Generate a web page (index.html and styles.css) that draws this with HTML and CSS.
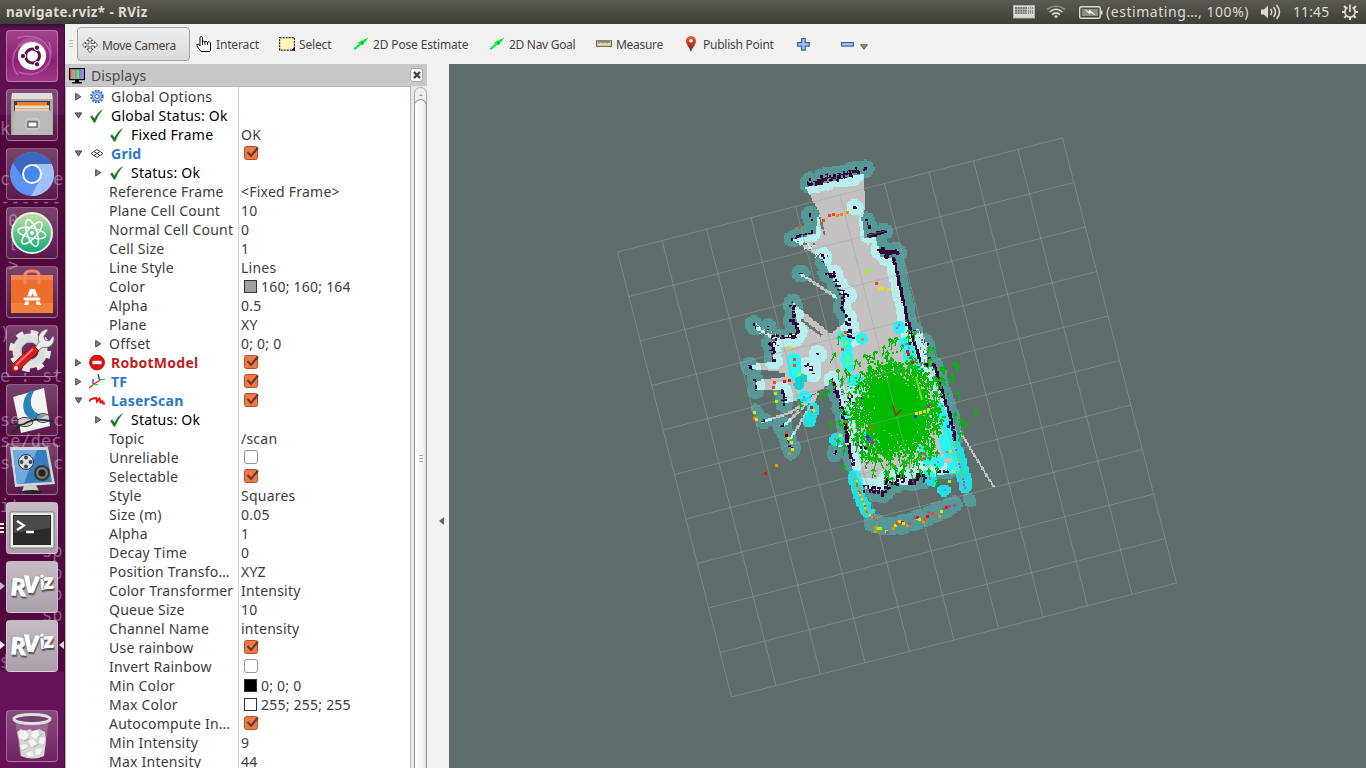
FILE: index.html
```html
<!DOCTYPE html>
<html lang="en">
<head>
<meta charset="utf-8">
<title>navigate.rviz* - RViz</title>
<link rel="stylesheet" href="styles.css">
</head>
<body>
<header class="topbar">
  <div class="title">navigate.rviz* - RViz</div>
  <div class="tray">
    <svg class="t-kbd" width="22" height="14" viewBox="0 0 22 14"><rect x=".5" y=".5" width="21" height="12.500" fill="#dfdbd2" stroke="#b5b2ab"/><rect x="2" y="2" width="12" height="7" fill="#777"/><path d="M2 4.500h12M2 7h12M4.500 2v7M7 2v7M9.500 2v7M12 2v7" stroke="#bbb" stroke-width=".7"/><path d="M15 2h5v7h-5z" fill="#888"/><path d="M15 4.500h5M16.500 2v7M18.500 2v7" stroke="#ccc"/></svg>
    <svg class="t-wifi" width="20" height="14" viewBox="0 0 20 14" fill="none" stroke="#dfdbd2" stroke-width="1.600"><path d="M1 4.500Q10-2.500 19 4.500" stroke="#8f8c85"/><path d="M3.500 7Q10 1.500 16.500 7"/><path d="M6 9.700Q10 6 14 9.700"/><path d="M8 11l2 2.500 2-2.500q-2-1.500-4 0z" fill="#dfdbd2" stroke="none"/></svg>
    <svg class="t-bat" width="24" height="13" viewBox="0 0 24 13"><rect x=".7" y=".7" width="20.500" height="11.500" rx="1.500" fill="none" stroke="#dfdbd2" stroke-width="1.400"/><rect x="3" y="3" width="16" height="7" fill="#8b8983"/><path d="M22 4.500h1.500v4H22z" fill="#dfdbd2"/><path d="M5 3l5 2.500.5-2L17 9.500l-5.500-2.500-.7 1.500z" fill="#eee"/></svg>
    <span class="t-est">(estimating…, 100%)</span>
    <svg class="t-vol" width="20" height="16" viewBox="0 0 20 16" fill="none" stroke="#dfdbd2" stroke-width="1.500"><path d="M0 5.500h3l4-4v13l-4-4H0z" fill="#dfdbd2" stroke="none"/><path d="M9.500 5q2.500 3 0 6M12.500 3q4 5 0 10M15.500 1q6 7 0 14"/></svg>
    <span class="t-time">11:45</span>
    <svg class="t-gear" width="16" height="16" viewBox="0 0 16 16" fill="none" stroke="#dfdbd2"><path d="M5.500 3.400a5.200 5.200 0 1 0 5 0" stroke-width="1.700"/><path d="M8 .5V8" stroke-width="1.700"/><path d="M0 8h3M13 8h3M2 2l2.300 2.300M14 2l-2.300 2.300M2.300 13.700l2-2M13.700 13.700l-2-2M8 13v3" stroke-width="2.200"/></svg>
  </div>
</header>
<div class="body">
  <nav class="launcher">
    <div class="ghost" aria-hidden="true" id="ghost"></div>
    <div class="tile dash"><svg viewBox="0 0 52 52"><g fill="none" stroke="#d487bf" opacity=".55" stroke-width="1.500"><path d="M11 8C35 0 50 20 42 35M43 12c8 24-12 38-30 30M12 45C1 32 8 12 26 12"/></g><path d="M12 15C22 0 42 10 41 27L26 26z" fill="#c673ac" opacity=".4"/><circle cx="26" cy="26" r="14" fill="#fff"/><circle cx="26.500" cy="26" r="7" fill="none" stroke="#5a1646" stroke-width="3"/><g fill="#5a1646" stroke="#fff"><circle cx="17" cy="26" r="2.700"/><circle cx="31" cy="17.700" r="2.700"/><circle cx="31" cy="34.300" r="2.700"/></g></svg></div>
    <div class="tile"><svg viewBox="0 0 52 52"><path d="M6 4h40l1 8H5z" fill="#ddd"/><path d="M5 10h42v36H5z" fill="#a9a9a8"/><path d="M8 12h36v14H8z" fill="#45413d"/><path d="M11 13h30v9H11z" fill="#e18138"/><path d="M9 16h34v8H9z" fill="#f2ac6a"/><path d="M9 18h34" stroke="#fff"/><path d="M7 24l3-4h32l4 4v22H7z" fill="#b9b9b8"/><path d="M9 21h34" stroke="#e7e7e7"/><rect x="20" y="30" width="13" height="10" rx="2" fill="#aaa" stroke="#ddd"/><rect x="22" y="33" width="9" height="5" fill="#fff" stroke="#444"/></svg></div>
    <div class="tile"><svg viewBox="0 0 52 52"><circle cx="26" cy="26" r="22" fill="#5b93f3"/><path d="M7 15A22 22 0 0 1 45 15l1 1H26l-9 14z" fill="#3b68bd"/><path d="M45.600 16H28l8 12-11 20A22 22 0 0 0 45.600 16z" fill="#a0c1fa"/><circle cx="26" cy="26" r="10" fill="#fff"/><circle cx="26" cy="26" r="8" fill="#4688f4"/></svg></div>
    <div class="tile"><svg viewBox="0 0 52 52"><defs><linearGradient id="atom" x2="0" y2="1"><stop stop-color="#c5e4a5"/><stop offset="1" stop-color="#0aa875"/></linearGradient></defs><circle cx="26" cy="26" r="20" fill="url(#atom)" stroke="#eee" stroke-width="2"/><g fill="none" stroke="#fff" stroke-width="1.500"><ellipse cx="26" cy="26" rx="14" ry="5" transform="rotate(12 26 26)"/><ellipse cx="26" cy="26" rx="14" ry="5" transform="rotate(72 26 26)"/><ellipse cx="26" cy="26" rx="14" ry="5" transform="rotate(132 26 26)"/></g><circle cx="26" cy="26" r="2" fill="#fff"/></svg></div>
    <div class="tile"><svg viewBox="0 0 52 52"><path d="M5 9h42v38H5z" fill="#ef6d2c"/><path d="M5 9h42v5H5z" fill="#f3824b"/><path d="M5 37h42v10H5z" fill="#f3813e"/><path d="M19 18V9q0-4 7-4t7 4v9" fill="none" stroke="#ee8a61" stroke-width="3"/><path d="M18 39l6-16h5l6 16h-4l-4.500-12L22 39z" fill="#fff"/><rect x="17" y="31" width="18" height="4" rx="2" fill="#fff" stroke="#ef6d2c"/></svg></div>
    <div class="tile"><svg viewBox="0 0 52 52"><circle cx="24" cy="26" r="13" fill="none" stroke="#dedede" stroke-width="9"/><circle cx="24" cy="26" r="18" fill="none" stroke="#e7e7e7" stroke-width="6" stroke-dasharray="7.100 7.050"/><circle cx="24" cy="26" r="9" fill="none" stroke="#b7b7b7"/><path d="M29 23l4-6c-2-6 1-11 8-13l1 1-4 6 1 4 4 1 4-5 1 1c1 7-5 12-11 10l-5 4z" fill="#eee" stroke="#777"/><path d="M27 20l6 6L13 45q-4 4-7 1-2-4 1-7z" fill="#d91d1a" stroke="#8a1010"/><path d="M10 40l17-16" stroke="#f77" stroke-width="2"/><circle cx="10" cy="43" r="2" fill="#fff"/></svg></div>
    <div class="tile"><svg viewBox="0 0 52 52"><path d="M7 13l31-9 6 38-29 7z" fill="#f3f3f2"/><path d="M29 6l-6 2C14 17 16 32 26 35q8 1 16-5-8 2-13-2C23 22 24 12 29 6z" fill="#2b83bb"/><g fill="#aaa8" stroke="#444"><ellipse cx="19" cy="38" rx="8" ry="4.500"/><ellipse cx="37" cy="34" rx="7" ry="4.500"/></g><path d="M4 40q8 2 14 0c10-6 18-5 30-2M6 49l8-7" fill="none" stroke="#292929" stroke-width="1.700"/></svg></div>
    <div class="tile"><svg viewBox="0 0 52 52"><path d="M4 4h38l7 37-40 3z" fill="#d4d6d9"/><path d="M7 7h33l6 32-35 2z" fill="#367dbd"/><path d="M7 7h24L18 40l-7 1z" fill="#6eaae0"/><path d="M18 43l12-1 3 6H16z" fill="#ccc"/><ellipse cx="26" cy="49" rx="10" ry="2" fill="#252525"/><circle cx="20" cy="19" r="7.500" fill="#ddd" stroke="#333"/><g fill="#354a5d"><circle cx="20" cy="14.500" r="2"/><circle cx="15.500" cy="19" r="2"/><circle cx="24.500" cy="19" r="2"/><circle cx="20" cy="23.500" r="2"/></g><circle cx="36" cy="30" r="7" fill="#777" stroke="#333" stroke-width="2"/><circle cx="36" cy="30" r="3.500" fill="#222"/></svg></div>
    <div class="tile lit"><svg viewBox="0 0 52 52"><rect x="4" y="10" width="44" height="36" rx="1" fill="#eee" stroke="#777"/><rect x="7" y="13" width="38" height="30" fill="#292b2a"/><path d="M8 14h36v12L8 31z" fill="#484b48"/><path d="M11 19l7 4.500-7 4.500M20 30h8" fill="none" stroke="#fff" stroke-width="2.300"/></svg></div>
    <div class="tile lit rv"><span class="rz r1">R</span><span class="rz r2">V</span><span class="rz r3">i</span><span class="rz r4">z</span></div>
    <div class="tile lit rv"><span class="rz r1">R</span><span class="rz r2">V</span><span class="rz r3">i</span><span class="rz r4">z</span></div>
    <div class="tile bin"><svg viewBox="0 0 52 52"><path d="M9 9l5 37q12 5 24 0l5-37z" fill="#c6b0c2" opacity=".35"/><path d="M11 22l4-3 4 2 5-2 3 3 6-3 6 3 1 8-2 16q-11 5-23 0l-2-16z" fill="#d4d6d2"/><g fill="#f4f5f2"><path d="M13 22l6-2 4 5-4 5-6-2zM26 21l5-1 3 5-5 4-4-3zM34 28l5-1-1 7-5-1zM22 31l5-2 4 5-5 3zM14 35l6-1 2 5-5 3zM30 39l6-1-1 6-6 1zM20 43l6-2 2 5-6 1z"/></g><path d="M18 31l5-2M27 37l6-3M16 41l6-3M32 27l4-3" stroke="#a8aaa6"/><ellipse cx="26" cy="9" rx="18" ry="4.500" fill="#74416b" stroke="#e0e0df" stroke-width="3"/></svg></div>
    <i class="mark m1"></i><i class="mark m2"></i><i class="mark m3"></i><i class="mark m4"></i>
  </nav>
  <main class="window">
    <div class="toolbar">
      <i class="grip"></i>
      <div class="tool active"><svg width="16" height="16" viewBox="0 0 16 16" fill="#fff" stroke="#333"><path d="M8 .5l3 3H9v3h3.500v-2L15.500 8l-3 3V9H9v3h2l-3 3.500L5 12h2V9H3.500v2l-3-3 3-3v2H7V3.500H5z" stroke-width=".8"/></svg><span>Move Camera</span></div>
      <div class="tool w-int"><svg width="17" height="17" viewBox="0 0 17 17"><path d="M5 15.500L1.500 11 .8 8.500l1.700-.5L4 10V2q0-1.500 1.200-1.500T6.500 2v4l1-1 1.500 1 1-1 1.500 1.500 1.500-1 1.500 1.500v7.500l-1 1z" fill="#fff" stroke="#111"/><path d="M6.500 6v3M9 6v3M11.500 6v3" stroke="#111"/></svg><span>Interact</span></div>
      <div class="tool w-sel"><svg width="16" height="14" viewBox="0 0 16 14"><rect x=".6" y=".6" width="14.800" height="12.500" fill="#fcf5b5" stroke="#222" stroke-width="1.200" stroke-dasharray="2 1"/><path d="M12 13.500h4V9.500z" fill="#111"/></svg><span>Select</span></div>
      <div class="tool w-pose"><svg width="16" height="14" viewBox="0 0 16 14"><path d="M.5 11.500L6 7 5 5.500 15.500.5 10 8 8.500 7.500 2 13z" fill="#00f52c"/><path d="M8 5l2 1-1 1.500" fill="none" stroke="#075"/></svg><span>2D Pose Estimate</span></div>
      <div class="tool w-nav"><svg width="16" height="14" viewBox="0 0 16 14"><path d="M.5 11.500L6 7 5 5.500 15.500.5 10 8 8.500 7.500 2 13z" fill="#00f52c"/><path d="M8 5l2 1-1 1.500" fill="none" stroke="#075"/></svg><span>2D Nav Goal</span></div>
      <div class="tool w-mea"><svg width="16" height="8" viewBox="0 0 16 8"><rect x=".5" y=".8" width="15" height="5.500" fill="#e7dda9" stroke="#555"/><path d="M3 1v2.500M5 1v2M7 1v2.500M9 1v2M11 1v2.500M13 1v2" stroke="#555"/></svg><span>Measure</span></div>
      <div class="tool w-pub"><svg width="12" height="16" viewBox="0 0 12 16"><defs><linearGradient id="pin" x2="0" y2="1"><stop stop-color="#f2593a"/><stop offset=".5" stop-color="#c23a22"/><stop offset="1" stop-color="#4b210f"/></linearGradient></defs><path d="M6 15.800C5 12 1 9 1 5a5 5 0 0 1 10 0c0 4-4 7-5 10.800z" fill="url(#pin)"/><circle cx="6" cy="4.700" r="1.800" fill="#fff"/></svg><span>Publish Point</span></div>
      <svg class="plus" width="13" height="13" viewBox="0 0 13 13"><path d="M4.700.7h3.500v4h4v3.500h-4v4H4.700v-4h-4V4.700h4z" fill="#a9c8ee" stroke="#3465a4" stroke-width="1.300"/></svg>
      <svg class="minus" width="13" height="5" viewBox="0 0 13 5"><rect x=".6" y=".6" width="11.800" height="3.500" fill="#a9c8ee" stroke="#3465a4" stroke-width="1.200"/></svg>
      <svg class="drop" width="8" height="6" viewBox="0 0 8 6"><path d="M.5.7h7L4 5.300z" fill="#888" stroke="#666"/></svg>
    </div>
    <div class="content">
      <section class="dock">
        <div class="dockhead"><svg width="16" height="16" viewBox="0 0 16 16"><defs><linearGradient id="mon"><stop stop-color="#c77"/><stop offset=".33" stop-color="#c99"/><stop offset=".34" stop-color="#5a6"/><stop offset=".66" stop-color="#8d8"/><stop offset=".67" stop-color="#77c"/><stop offset="1" stop-color="#aaf"/></linearGradient></defs><rect x=".6" y=".6" width="14.800" height="11" fill="url(#mon)" stroke="#000" stroke-width="1.200"/><path d="M6 12h4v2h3v1.500H3V14h3z" fill="#000"/></svg><span>Displays</span><div class="close"><svg width="8" height="8" viewBox="0 0 8 8"><path d="M1 1l6 6M7 1L1 7" stroke="#444" stroke-width="2.400"/></svg></div></div>
        <div class="treewrap"><div class="tree" id="tree"></div><div class="scroll"><div class="up"></div><div class="thumb"><i></i></div></div></div>
      </section>
      <div class="splitter"><i></i></div>
      <section class="view"><canvas class="map" id="map" width="204" height="300"></canvas><svg class="over" id="over" viewBox="449 64 917 704" width="917" height="704"></svg></section>
    </div>
  </main>
</div>
<script src="app.js"></script>
</body>
</html>
```
FILE: styles.css
```css
* { box-sizing: border-box; }
body { margin: 0; width: 1366px; height: 768px; overflow: hidden; display: flex; flex-direction: column; font-family: "Noto Sans", "Open Sans", sans-serif; background: #f2f1f0; color: #3c3c3c; }
svg { display: block; flex: none; }
.topbar { height: 24px; flex: none; display: flex; justify-content: space-between; align-items: center; background: linear-gradient(#5c5a50, #3e3d38); color: #dfdbd2; font-size: 14px; line-height: 24px; }
.title { padding-left: 6px; font-weight: 700; font-size: 13.4px; letter-spacing: .4px; }
.tray { display: flex; align-items: center; width: 353px; white-space: nowrap; }
.t-wifi { margin-left: 11px; }
.t-bat { margin-left: 13px; }
.t-est { margin-left: 3px; width: 144px; font-size: 14px; letter-spacing: .55px; }
.t-vol { margin-left: 11px; }
.t-time { margin-left: 12px; width: 37px; font-size: 13.8px; letter-spacing: .2px; }
.t-gear { margin-left: 12px; }
.body { flex: 1; display: flex; min-height: 0; }
.launcher { position: relative; width: 65px; flex: none; padding: 6px 0 0 6px; display: flex; flex-direction: column; gap: 7px; background: linear-gradient(#360a30 0, #5c1150 5px, #5c1150 90px, #50083f 91px, #50083f 647px, #661258 648px); border-right: 1px solid #430a39; overflow: hidden; }
.tile { position: relative; flex: none; width: 52px; height: 52px; border-radius: 4px; border: 1px solid rgba(255,255,255,.3); background: linear-gradient(rgba(255,255,255,.24), rgba(255,255,255,.07)); }
.tile svg { width: 52px; height: 52px; margin: -1px; }
.dash { background: linear-gradient(#a14489, #8f1f78 60%, #9b3b84); }
.lit { background: linear-gradient(#c6bac4, #aba0aa); }
.bin { margin-top: 31px; }
.rz { position: absolute; font-family: "Open Sans", sans-serif; font-weight: 800; color: #fff; text-shadow: 1px 2px 1px #555, -1px 0 1px #999; line-height: 1; }
.r1 { font-size: 25px; left: 3px; top: 12px; transform: rotate(5deg); }
.r2 { font-size: 24px; left: 16px; top: 10px; transform: rotate(5deg); }
.r3 { font-size: 20px; left: 32px; top: 11px; transform: scaleX(.8) rotate(-5deg); }
.r4 { font-size: 21px; left: 36px; top: 9px; transform: rotate(-3deg); }
.ghost { position: absolute; left: 0; top: 0; }
.ghost span { position: absolute; font: 17px/20px "DejaVu Sans Mono", monospace; color: rgba(222,175,215,.5); white-space: pre; }
.mark { position: absolute; width: 0; height: 0; border: 4px solid transparent; border-left: 5px solid #eee; left: 0; }
.m1 { top: 499px; height: 12px; border: 0; width: 4px; background: repeating-linear-gradient(#eee 0 2px, transparent 2px 4px); }
.m2 { top: 558px; border-left-color: #c9b4c5; }
.m3 { top: 617px; }
.m4 { top: 617px; left: auto; right: 0; border-left: 0; border-right: 5px solid #ddd; }
.window { flex: 1; min-width: 0; display: flex; flex-direction: column; }
.toolbar { height: 40px; flex: none; display: flex; align-items: center; padding-left: 4px; font-size: 12px; letter-spacing: -.15px; color: #444; white-space: nowrap; }
.grip { width: 4px; height: 8px; margin-right: 4px; background: repeating-linear-gradient(#bbb 0 1px, transparent 1px 3px); }
.tool { display: flex; align-items: center; }
.tool span { margin-left: 4px; }
.active { width: 113px; height: 34px; padding: 2px 0 0 4px; border: 1px solid #a5a29d; border-radius: 4px; background: linear-gradient(#efeeed, #dcdad8); letter-spacing: -.35px; }
.w-int { margin-left: 6px; width: 83px; }
.w-int span { margin-left: 3px; }
.w-sel { width: 74px; }
.w-pose { width: 136px; }
.w-nav { width: 107px; letter-spacing: -.3px; }
.w-mea { width: 89px; letter-spacing: -.3px; }
.w-pub { width: 112px; letter-spacing: -.25px; }
.w-pub span { margin-left: 6px; }
.minus { margin-left: 31px; }
.drop { margin: 5px 0 0 6px; }
.content { flex: 1; display: flex; min-height: 0; }
.dock { width: 362px; flex: none; display: flex; flex-direction: column; }
.dockhead { height: 22px; flex: none; display: flex; align-items: center; background: #c8c8c8; padding: 1px 4px 0; font-size: 14px; letter-spacing: .1px; }
.dockhead span { flex: 1; margin-left: 6px; color: #4a4a4a; }
.close { width: 13px; height: 14px; border-radius: 3px; background: #f5f5f5; border: 1px solid #aaa; display: grid; place-items: center; margin-top: -2px; }
.treewrap { flex: 1; display: flex; min-height: 0; }
.tree { width: 346px; flex: none; overflow: hidden; background: linear-gradient(#d5d5d5, #d5d5d5) 172px 0 / 1px 100% no-repeat #fff; border: 1px solid #bab6b2; border-bottom: 0; }
.row { height: 19px; display: flex; line-height: 19px; font-size: 14px; white-space: nowrap; letter-spacing: .23px; }
.name { width: 173px; flex: none; display: flex; align-items: center; }
.name b { font-weight: 700; letter-spacing: .25px; }
.lv0 { padding-left: 8px; }
.lv1 { padding-left: 28px; }
.arrow { width: 15px; flex: none; }
.row .ic { width: 22px; flex: none; }
.black { color: #000; }
.blue { color: #2a78c8; }
.red { color: #c01f1f; }
.val { display: flex; align-items: center; padding-left: 2px; }
.chip { width: 13px; height: 13px; margin: 0 4px 0 3px; border: 1px solid #333; }
.box { width: 14px; height: 14px; margin: 0 0 1px 3px; border: 1px solid #99958f; border-radius: 3px; background: #fff; }
.val svg { margin: 0 0 1px 2px; }
.scroll { width: 16px; padding: 1px 0 0 3px; background: #e8e7e5; display: flex; flex-direction: column; }
.up { width: 13px; height: 20px; flex: none; border: 1px solid #aaa7a3; border-radius: 7px 7px 0 0; background: #f0efee; position: relative; }
.up::after { content: ""; position: absolute; left: 4px; top: 6px; border: 2px solid transparent; border-top: 0; border-bottom-color: #999; }
.thumb { margin-top: -8px; width: 13px; flex: 1; border: 1px solid #96928e; border-bottom: 0; border-radius: 7px 7px 0 0; background: linear-gradient(90deg, #fff, #f4f4f3 70%, #dedcda); display: grid; place-items: center; position: relative; }
.thumb i { width: 4px; height: 8px; margin-top: 50px; background: repeating-linear-gradient(#aaa 0 1px, transparent 1px 3px); }
.splitter { width: 22px; flex: none; padding: 453px 0 0 12px; }
.splitter i { display: block; width: 0; height: 0; border: 4px solid transparent; border-left: 0; border-right: 5px solid #666; }
.view { flex: 1; position: relative; background: #5f6e6c; overflow: hidden; }
.map { position: absolute; left: 287px; top: 86px; width: 272px; height: 400px; image-rendering: pixelated; }
.over { position: absolute; left: 0; top: 0; }
```
FILE: app.js
```javascript
// ---- property tree ----
const icons = {
  gear: '<circle cx="8" cy="7.500" r="5.800" fill="none" stroke="#4478b8" stroke-width="2" stroke-dasharray="2 1.036"/><circle cx="8" cy="7.500" r="4.500" fill="#a5c5ea" stroke="#4478b8"/><circle cx="8" cy="7.500" r="2" fill="#dce9f7" stroke="#4478b8"/>',
  ok: '<path d="M1.500 9L3 7.500l2.500 3.300Q9 4 13.500 1.500 9 7 6 14.500H5z" fill="#1e7420" stroke="#1e7420" stroke-width=".4"/>',
  grid: '<path d="M8 3.500L14 7.500 8 11.500 2 7.500zM5 5.500l6 4M11 5.500l-6 4" fill="none" stroke="#444"/>',
  stop: '<circle cx="8" cy="7.500" r="7.500" fill="#d11" stroke="#a00" stroke-width=".8"/><rect x="3.500" y="5.800" width="9" height="3.400" fill="#fff"/>',
  tf: '<g fill="none" stroke-width="1.200"><path d="M0 14l5-4 6-4" stroke="#e11"/><path d="M4 5v5M9 0l1.500 6" stroke="#22d"/><path d="M4 10.500h5M10.500 5.500H16" stroke="#1d1"/></g>',
  laser: '<path d="M0 8.500l1.500-2 3-1 3-.5.5 3.500 2.500-3 1 4 2-1.500.5 2.500H16" fill="none" stroke="#f00" stroke-width="1.800"/>'
};
const check = '<svg width="17" height="16" viewBox="0 0 17 16"><rect x="1.500" y="1.500" width="13" height="13" rx="2" fill="#f0784a" stroke="#b94c27"/><path d="M4.500 7l3.500 4L15 2.500" fill="none" stroke="#613a28" stroke-width="2"/></svg>';
// level, arrow, icon, label, class, value, swatch
const rows = [
  [0, 'r', 'gear', 'Global Options', '', ''], [0, 'd', 'ok', 'Global Status: Ok', 'black', ''], [1, '', 'ok', 'Fixed Frame', 'black', 'OK'],
  [0, 'd', 'grid', '<b>Grid</b>', 'blue', true], [1, 'r', 'ok', 'Status: Ok', 'black', ''],
  [1, '', '', 'Reference Frame', '', '&lt;Fixed Frame&gt;'], [1, '', '', 'Plane Cell Count', '', '10'], [1, '', '', 'Normal Cell Count', '', '0'],
  [1, '', '', 'Cell Size', '', '1'], [1, '', '', 'Line Style', '', 'Lines'], [1, '', '', 'Color', '', '160; 160; 164', '#a0a0a4'],
  [1, '', '', 'Alpha', '', '0.5'], [1, '', '', 'Plane', '', 'XY'], [1, 'r', '', 'Offset', '', '0; 0; 0'],
  [0, 'r', 'stop', '<b>RobotModel</b>', 'red', true], [0, 'r', 'tf', '<b>TF</b>', 'blue', true], [0, 'd', 'laser', '<b>LaserScan</b>', 'blue', true],
  [1, 'r', 'ok', 'Status: Ok', 'black', ''], [1, '', '', 'Topic', '', '/scan'], [1, '', '', 'Unreliable', '', false], [1, '', '', 'Selectable', '', true],
  [1, '', '', 'Style', '', 'Squares'], [1, '', '', 'Size (m)', '', '0.05'], [1, '', '', 'Alpha', '', '1'], [1, '', '', 'Decay Time', '', '0'],
  [1, '', '', 'Position Transfo…', '', 'XYZ'], [1, '', '', 'Color Transformer', '', 'Intensity'], [1, '', '', 'Queue Size', '', '10'],
  [1, '', '', 'Channel Name', '', 'intensity'], [1, '', '', 'Use rainbow', '', true], [1, '', '', 'Invert Rainbow', '', false],
  [1, '', '', 'Min Color', '', '0; 0; 0', '#000'], [1, '', '', 'Max Color', '', '255; 255; 255', '#fff'], [1, '', '', 'Autocompute In…', '', true],
  [1, '', '', 'Min Intensity', '', '9'], [1, '', '', 'Max Intensity', '', '44']
];
document.getElementById('tree').innerHTML = rows.map(([lv, arr, ic, label, cls, val, chip]) => {
  const a = arr === 'r' ? '<path d="M1.500 1.500L7 5 1.500 8.500z" fill="#888" stroke="#444"/>' : arr === 'd' ? '<path d="M1 2h7L4.500 7.500z" fill="#777" stroke="#444"/>' : '';
  const v = val === true ? check : val === false ? '<i class="box"></i>' : (chip ? `<i class="chip" style="background:${chip}"></i>` : '') + val;
  return `<div class="row"><div class="name lv${lv} ${cls}"><span class="arrow"><svg width="9" height="9" viewBox="0 0 9 9.500">${a}</svg></span>` +
    (ic ? `<span class="ic"><svg width="16" height="16" viewBox="0 0 16 16">${icons[ic]}</svg></span>` : '') +
    `${label}</div><div class="val">${v}</div></div>`;
}).join('');

// ---- terminal text showing through the launcher ----
document.getElementById('ghost').innerHTML = [
  [0, 95, 'ki'], [0, 145, 'c'], [53, 145, 'e'], [0, 167, '------'], [8, 187, '0'], [8, 208, '['], [8, 231, '>'], [0, 300, ')'], [0, 342, 'e'], [20, 342, ':'], [42, 342, 'st'],
  [0, 386, 'se'], [53, 386, 'c'], [0, 407, 'se/dec'], [0, 429, 'se'], [53, 429, 'c'], [0, 472, 'it'], [42, 517, 'sp'], [42, 539, 'sp'], [42, 560, 'sp'], [42, 581, 'sp'], [0, 628, '$']
].map(([x, y, t]) => `<span style="left:${x}px;top:${y}px">${t}</span>`).join('');

// ---- occupancy map, one cell is 4/3 px ----
let seed = 71;
const rnd = () => (seed = (seed * 16807) % 2147483647) / 2147483647;
const gauss = () => rnd() + rnd() + rnd() + rnd() - 2;
const W = 204, H = 300, X0 = 736, Y0 = 150, C = 4 / 3;
const ctx = document.getElementById('map').getContext('2d');
const free = new Uint8Array(W * H), halo = new Uint8Array(W * H), wall = new Uint8Array(W * H), color = new Array(W * H);
function inside(x, y, p) {
  let r = false;
  for (let i = 0, j = p.length - 1; i < p.length; j = i++)
    if ((p[i][1] > y) !== (p[j][1] > y) && x < (p[j][0] - p[i][0]) * (y - p[i][1]) / (p[j][1] - p[i][1]) + p[i][0]) r = !r;
  return r;
}
function fillPoly(p) {
  for (let j = 0; j < H; j++) for (let i = 0; i < W; i++)
    if (inside(X0 + i * C, Y0 + j * C, p)) free[j * W + i] = 1;
}
function disc(x, y, r, f) {
  const ci = (x - X0) / C, cj = (y - Y0) / C, rr = r / C;
  for (let j = Math.floor(cj - rr); j <= cj + rr; j++) for (let i = Math.floor(ci - rr); i <= ci + rr; i++)
    if (i >= 0 && j >= 0 && i < W && j < H && Math.hypot(i - ci, j - cj) <= rr) f(j * W + i);
}
function along(pts, step, f) {
  for (let k = 1; k < pts.length; k++) {
    const [a, b] = pts[k - 1], [c, d] = pts[k], n = Math.max(1, Math.round(Math.hypot(c - a, d - b) / step));
    for (let s = 0; s <= n; s++) f(a + (c - a) * s / n, b + (d - b) * s / n);
  }
}
fillPoly([[805,187],[863,173],[865,207],[861,217],[864,238],[875,236],[880,256],[893,257],[907,315],[920,363],[935,368],[948,417],[960,470],[944,474],[930,476],[917,474],[906,484],[887,482],[882,491],[863,487],[852,468],[843,420],[834,380],[822,388],[808,396],[785,403],[781,390],[755,389],[755,380],[785,376],[784,372],[750,368],[751,364],[773,361],[772,338],[795,333],[797,323],[793,303],[803,311],[830,333],[845,321],[842,295],[830,274],[823,260],[797,243],[792,239],[815,233],[818,211]]);
fillPoly([[914,335],[919,330],[927,345],[922,366],[916,352]]);
const strokeFree = (pts, w) => along(pts, 1, (x, y) => disc(x, y, w, k => { free[k] = 1; }));
[[[801,274],[836,297]], [[755,327],[778,339]], [[817,393],[790,412],[762,421]], [[815,395],[782,426]], [[815,397],[790,438]], [[838,446],[852,443]]].forEach(l => strokeFree(l, 1.3));
function walls(pts, density, spread, thick, reach = 7.5) {
  along(pts, 1.4, (x, y) => {
    if (rnd() > density) return;
    const px = x + gauss() * spread, py = y + gauss() * spread;
    disc(px, py, thick || 1.2, k => { wall[k] = 1; });
    disc(px, py, reach + rnd() * 1.6, k => { halo[k] = 1; });
  });
}
walls([[806,184],[836,176],[863,169]], .95, 3, 1.5); walls([[808,183],[835,178],[848,174]], .5, 4, 1.2);
walls([[810,211],[811,220]], .4, 2); walls([[812,231],[799,235],[791,239]], .8, 1);
walls([[867,218],[870,229]], .6, 1.5); walls([[868,235],[884,231]], 1, .8, 1.8);
walls([[881,249],[884,254],[897,251]], 1, 2.5, 2.2, 8); walls([[893,257],[900,288],[907,320],[920,362]], 1, .5, 1.5, 8);
walls([[907,325],[914,340]], .9, 3.5); walls([[920,330],[923,336]], .4, 2); walls([[934,364],[941,390],[950,417],[955,440]], 1, .8, 1.5);
walls([[925,340],[929,356]], .3, 2); walls([[922,363],[932,367]], .5, 2); walls([[822,255],[822,265]], .25, 2);
walls([[829,271],[836,284],[845,295],[842,302],[844,312],[848,324],[850,338]], .9, 3.2, 1.5);
walls([[801,273],[799,273]], 1, 1); walls([[853,206],[854,208]], .5, 1);
walls([[793,303],[792,320],[797,331],[793,337],[774,336],[772,345],[773,362]], .8, 2.2, 1.4);
walls([[754,325],[758,329]], .6, 1); walls([[766,323],[768,328]], .3, 1); walls([[750,365],[751,370]], .8, 1); walls([[755,379],[756,390]], .6, 1);
walls([[782,388],[784,404]], .9, 1, 1.4); walls([[762,420],[764,421]], 1, 1); walls([[780,426],[783,424]], 1, 1); walls([[785,433],[790,447],[791,452]], .4, 1);
walls([[832,379],[837,396],[843,415],[847,438],[852,463]], .9, 1.5, 1.4); walls([[838,404],[861,395]], .3, 3);
walls([[835,451],[835,453]], 1, 1); walls([[811,372],[804,363]], .7, 4); walls([[817,352],[818,354]], .4, 1); walls([[850,378],[862,400]], .25, 3);
walls([[863,486],[874,490],[882,492],[887,478],[895,484],[900,477],[911,483],[917,471],[924,480]], .95, 2.6, 1.5);
walls([[935,471],[947,471]], .8, 1); walls([[855,443],[867,448]], .6, 1.5);
for (let k = 0; k < W * H; k++) color[k] = free[k] ? (halo[k] ? '#b9eeee' : '#c4c1c3') : (halo[k] ? '#559997' : null);
// scattered speckle where rays graze obstacles
[[800,242,822,257],[755,326,778,340],[920,332,926,362],[840,385,860,410],[850,430,870,470]].forEach(([a, b, c, d]) => {
  for (let n = 0; n < 36; n++) { const t = rnd(); disc(a + (c - a) * t + gauss() * 4, b + (d - b) * t + gauss() * 4, 1, k => { color[k] = rnd() > .35 ? '#d5eded' : '#5f6e6c'; }); }
});
along([[802,320],[820,334]], 1, (x, y) => disc(x, y, 1.4, k => { color[k] = '#697775'; }));
along([[818,213],[824,234]], 1.5, (x, y) => rnd() > .4 && disc(x, y, 1, k => { color[k] = '#697775'; }));
along([[960,432],[993,486]], 1, (x, y) => disc(x, y, 1, k => { color[k] = '#c4c1c3'; }));
// scan echo bands beyond the far wall
along([[872,522],[886,526],[905,523],[930,514],[953,504]], 2.5, (x, y) => disc(x + gauss(), y + gauss(), 8 + rnd() * 2, k => { color[k] = '#559997'; }));
along([[968,498],[970,501]], 2, (x, y) => disc(x, y, 6, k => { color[k] = '#559997'; }));
along([[755,408],[764,420]], 4, (x, y) => disc(x, y, 5, k => { color[k] = color[k] || '#559997'; }));
along([[779,424],[786,438],[790,452]], 3, (x, y) => disc(x, y, 7.5, k => { if (!free[k]) color[k] = '#559997'; }));
// local costmap
const cyan = (pts, r, c) => along(pts, 3, (x, y) => disc(x + gauss(), y + gauss(), r + rnd(), k => { color[k] = c || (free[k] ? '#27f6f7' : '#1fdfe1'); }));
cyan([[898,326],[898,327]], 6); cyan([[904,342],[909,357],[914,365]], 5.5); cyan([[841,335],[846,338]], 5); cyan([[845,347],[847,365]], 5);
cyan([[862,337],[862,338]], 5); cyan([[794,359],[795,375]], 6); cyan([[801,377],[798,383]], 4.5, '#16cfd1'); cyan([[803,396],[804,397]], 5.5); cyan([[813,407],[808,420]], 5.500);
cyan([[834,439],[838,437]], 5.5); cyan([[854,476],[858,494],[866,511]], 5.5); cyan([[868,511],[872,510]], 2);
cyan([[852,380],[856,380]], 5); cyan([[943,489],[944,490]], 5.5);
cyan([[945,417],[949,430],[955,448],[961,467],[965,485]], 6); cyan([[938,405],[944,420]], 4); cyan([[937,462],[938,461]], 6); cyan([[950,469],[955,465]], 5);
cyan([[927,475],[931,481]], 5); cyan([[922,448],[925,460]], 4); cyan([[943,438],[948,452]], 5); cyan([[843,413],[844,422]], 3.5); cyan([[866,434],[874,442]], 3);
for (let k = 0; k < W * H; k++) {
  if (wall[k]) color[k] = '#330637';
  if (color[k]) { ctx.fillStyle = color[k]; ctx.fillRect(k % W, Math.floor(k / W), 1, 1); }
}

// ---- pose arrows, grid and scan points ----
let out = '<g shape-rendering="crispEdges">';
let shafts = '';
function arrow(x, y, ang, len) {
  const tip = [x + Math.sin(ang) * len, y - Math.cos(ang) * len];
  const wing = s => [tip[0] + Math.sin(ang + s) * -3.5, tip[1] + Math.cos(ang + s) * 3.5];
  const a = wing(.65), b = wing(-.65), f = v => v.map(n => n.toFixed(1)).join(' ');
  shafts += `M${f([x, y])}L${f(tip)}M${f(a)}L${f(tip)}L${f(b)}`;
}
let core = '';
for (let n = 0; n < 3200; n++) {
  const x = 896 + gauss() * 29, y = 410 + gauss() * 36;
  core += `M${x.toFixed(0)} ${y.toFixed(0)}h2v2h-2z`;
}
out += `<path d="${core}" fill="#00c000"/>`;
for (let n = 0; n < 620; n++) arrow(896 + gauss() * 40, 417 + gauss() * 45, gauss() * .45, 7 + rnd() * 5);
[[889,347],[895,346],[908,345],[909,339],[874,360],[868,364],[887,360],[838,345],[800,412],[819,400],[832,431],[845,474],[894,486],[904,478],[935,488],[962,428],[974,418],[957,372],[960,400],[929,390],[944,375],[936,404],[928,355]].forEach(([x, y]) => arrow(x, y, gauss() * .3, 9));
arrow(959,368,-.9,8); arrow(824,399,.5,10); arrow(963,429,.7,9);
out += `<path d="${shafts}" fill="none" stroke="#00ba00" stroke-width="1.200"/></g>`;
let g = '';
for (let k = 0; k <= 10; k++) {
  const t = k / 10;
  g += `M${617.5 + 445 * t} ${252 - 114 * t}l114 445M${617.5 + 114 * t} ${252 + 445 * t}l445-114`;
}
out += `<path d="${g}" fill="none" stroke="#a0a0a4" stroke-opacity=".5" stroke-width="1"/><g shape-rendering="crispEdges">`;
const dot = (x, y, c, s = 2) => { out += `<rect x="${x.toFixed(0)}" y="${y.toFixed(0)}" width="${s}" height="${s}" fill="${c}"/>`; };
const pal = ['#f41', '#f80', '#ed0', '#9f0', '#e11'];
[[798,226,0],[822,219,0],[828,214,0],[832,213,0],[836,214,1],[840,213,1],[846,211,1],[864,271,3],[868,269,3],[875,282,0],[878,287,2],[881,287,2],[887,288,2],[789,346,2],[861,338,1],[841,334,1],[844,331,0],[841,348,0],[845,342,3],[793,358,0],[793,364,0],[798,373,3],[773,381,0],[772,386,0],[783,380,4],[788,379,4],[774,392,3],[775,400,3],[753,411,2],[753,417,1],[755,418,2],[810,406,4],[812,409,2],[785,431,0],[787,437,2],[790,441,2],[791,448,2],[788,452,1],[775,464,1],[764,472,4],[906,350,4],[907,353,4],[911,361,4],[846,356,3],[847,362,3],[843,420,0],[870,426,0],[839,434,2],[922,452,0],[923,457,0],[949,450,2],[952,470,2],[948,480,3],[915,412,2],[919,411,2],[923,410,2],[927,408,3]].forEach(([x, y, c]) => dot(x, y, pal[c], 2.6));
along([[854,478],[858,492],[865,509],[874,519]], 2.3, (x, y) => dot(x + gauss(), y, pal[Math.floor(rnd() * 4)]));
along([[871,533],[875,526],[886,531],[898,520],[906,524],[916,516],[922,520],[928,511],[937,514],[942,507],[953,504]], 3.5, (x, y) => { if (rnd() > .2) dot(x + gauss(), y + gauss(), rnd() > .75 ? '#9a5a91' : pal[Math.floor(rnd() * 5)], 2.6); });
along([[952,438],[959,466],[964,487]], 3, (x, y) => dot(x, y, rnd() > .5 ? '#6ad83a' : '#b455c7'));
[[898,324],[896,327],[905,343],[908,347],[913,359],[803,396],[811,411],[834,438],[937,461],[944,489],[929,478],[920,364],[946,451]].forEach(([x, y]) => dot(x, y, '#d05ad8'));
[[866,435],[867,437],[914,415],[947,425]].forEach(([x, y]) => dot(x, y, '#1537f0', 3));
[[868,438],[871,441],[927,405]].forEach(([x, y]) => dot(x, y, '#c80be0', 3));
out += '</g><path d="M916 377l6 23" stroke="#70df22" stroke-width="2"/><path d="M893 406l3 9 5-5" fill="none" stroke="#a32b12" stroke-width="1.500"/>';
document.getElementById('over').innerHTML = out;
```
